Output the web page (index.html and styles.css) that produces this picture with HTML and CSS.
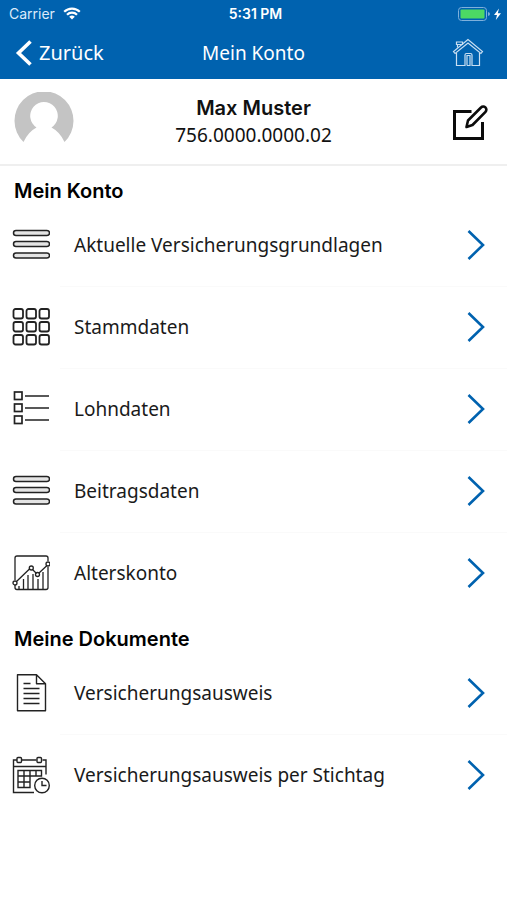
FILE: index.html
```html
<!DOCTYPE html>
<html lang="de">
<head>
<meta charset="utf-8">
<meta name="viewport" content="width=device-width, initial-scale=1">
<title>Mein Konto</title>
<link rel="stylesheet" href="styles.css">
</head>
<body>
<svg class="sprite" aria-hidden="true">
  <symbol id="chevron" viewBox="0 0 18 32"><path d="M1.500 2 16 16 1.500 30" fill="none" stroke="currentColor" stroke-width="2.600"/></symbol>
  <symbol id="bars" viewBox="0 0 38 38"><g fill="#e4e4e4" stroke="#222" stroke-width="1.500"><rect x="1.500" y="4.500" width="36" height="5" rx="2.500"/><rect x="1.500" y="15.500" width="36" height="5" rx="2.500"/><rect x="1.500" y="27" width="36" height="5" rx="2.500"/></g></symbol>
</svg>
<header class="top">
  <div class="status">
    <div class="carrier"><span>Carrier</span>
      <svg width="18" height="13" viewBox="0 0 18 13" aria-hidden="true"><g fill="none" stroke="#fff" stroke-width="2.200"><path d="M1.200 4.800a11 11 0 0 1 15.600 0"/><path d="M4 7.700a7 7 0 0 1 10 0"/></g><path d="M9 12.600 6.200 9.800a4 4 0 0 1 5.600 0z" fill="#fff"/></svg>
    </div>
    <div class="time">5:31 PM</div>
    <div class="power">
      <svg width="44" height="16" viewBox="0 0 44 16" aria-hidden="true"><rect x=".5" y="1.500" width="28" height="13" rx="3" fill="none" stroke="#7eb0dc"/><rect x="2.500" y="3.500" width="24" height="9" rx="1" fill="#4cd964"/><path d="M30 6v4q2-.500 2-2t-2-2z" fill="#7eb0dc"/><path d="M41 2.500 36 9h3l-1.200 5L43 7.200h-3.200z" fill="#fff"/></svg>
    </div>
  </div>
  <nav class="bar">
    <button class="back" type="button"><svg width="18" height="28" viewBox="0 0 18 28" aria-hidden="true"><path d="M16.500 2.500 4.500 14l12 11.500" fill="none" stroke="#fff" stroke-width="3.600"/></svg><span>Zurück</span></button>
    <h1>Mein Konto</h1>
    <button class="home" type="button" aria-label="Startseite"><svg width="32" height="30" viewBox="0 0 32 30" aria-hidden="true"><g fill="none" stroke="#c9dff2" stroke-width="1.200"><path d="M16 1.500 1.500 13.500l1.600 2L16 5l12.900 10.500 1.600-2z"/><path d="M4.500 15v12.500h8.500V17q0-1.500 1.500-1.500h4q1.500 0 1.500 1.500v10.500h7.500V15M15 27.500V17.500h3v10h-3"/><path d="M5.500 9.500V6.500h4.500M4.500 4h6v2.500h-6z"/></g></svg></button>
  </nav>
</header>
<main>
  <section class="profile">
    <svg width="60" height="60" viewBox="0 0 60 60" role="img" aria-label="Profilbild"><path d="M9.500 50A29.500 29.500 0 1 1 50.500 50Q46 40 37.500 35.500A13.800 13.800 0 1 0 22.500 35.500Q14 40 9.500 50z" fill="#c4c4c4"/></svg>
    <div class="person"><strong>Max Muster</strong><span>756.0000.0000.02</span></div>
    <button type="button" aria-label="Bearbeiten"><svg width="38" height="38" viewBox="0 0 38 38" aria-hidden="true"><g fill="none" stroke="#0b0b0b"><path d="M20.500 8.500H3.500v27H31.500V19" stroke-width="3"/><path d="M15.500 24 17 17.500 30 4.500a3 3 0 0 1 4.500 4.300L21.500 22z" stroke-width="2.600" stroke-linejoin="round"/></g></svg></button>
  </section>
  <section>
    <h2>Mein Konto</h2>
    <ul>
      <li><a href="#grundlagen"><svg class="icon" aria-hidden="true"><use href="#bars"/></svg><span>Aktuelle Versicherungsgrundlagen</span><svg class="chevron" aria-hidden="true"><use href="#chevron"/></svg></a></li>
      <li><a href="#stammdaten"><svg class="icon" viewBox="0 0 38 38" aria-hidden="true"><g fill="none" stroke="#222" stroke-width="1.800"><rect x="1.500" y="1" width="9.500" height="9.500" rx="2"/><rect x="14.500" y="1" width="9.500" height="9.500" rx="2"/><rect x="27.500" y="1" width="9.500" height="9.500" rx="2"/><rect x="1.500" y="14" width="9.500" height="9.500" rx="2"/><rect x="14.500" y="14" width="9.500" height="9.500" rx="2"/><rect x="27.500" y="14" width="9.500" height="9.500" rx="2"/><rect x="1.500" y="27" width="9.500" height="9.500" rx="2"/><rect x="14.500" y="27" width="9.500" height="9.500" rx="2"/><rect x="27.500" y="27" width="9.500" height="9.500" rx="2"/></g></svg><span>Stammdaten</span><svg class="chevron" aria-hidden="true"><use href="#chevron"/></svg></a></li>
      <li><a href="#lohndaten"><svg class="icon" viewBox="0 0 38 38" aria-hidden="true"><g fill="none" stroke="#222" stroke-width="1.700"><rect x="2.500" y="2" width="7.500" height="7.500"/><rect x="2.500" y="14" width="7.500" height="7.500"/><rect x="2.500" y="26" width="7.500" height="7.500"/><path d="M13 6h24M13 18h24M13 30h24"/></g></svg><span>Lohndaten</span><svg class="chevron" aria-hidden="true"><use href="#chevron"/></svg></a></li>
      <li><a href="#beitragsdaten"><svg class="icon" aria-hidden="true"><use href="#bars"/></svg><span>Beitragsdaten</span><svg class="chevron" aria-hidden="true"><use href="#chevron"/></svg></a></li>
      <li><a href="#alterskonto"><svg class="icon" viewBox="0 0 38 38" aria-hidden="true"><g fill="none" stroke="#222" stroke-width="1.300"><path d="M3 26V4q0-2 2-2h29q2 0 2 2v3M3 31v2.500q0 2 2 2h29q2 0 2-2V13"/><path d="m4.500 27.500 13.500-13M20.500 15.500l4 4M27 19l8-7.500"/><circle cx="3" cy="29" r="2"/><circle cx="19.300" cy="14" r="2"/><circle cx="25.500" cy="20.500" r="2"/><circle cx="36" cy="10" r="2"/><path d="M7 32v3M11.500 25v10M16 21v14M21 20v15M26 25v10M31 18v17"/></g></svg><span>Alterskonto</span><svg class="chevron" aria-hidden="true"><use href="#chevron"/></svg></a></li>
    </ul>
  </section>
  <section>
    <h2>Meine Dokumente</h2>
    <ul>
      <li><a href="#ausweis"><svg class="icon" viewBox="0 0 38 38" aria-hidden="true"><g fill="none" stroke="#222" stroke-width="1.400" stroke-linejoin="round"><path d="M5.500 .7h19l9 9v27h-28zM24.500 .7v9h9M11.500 9.500h7M11.500 14.500h16M11.500 19.500h16M11.500 24.500h16M11.500 29.500h16"/></g></svg><span>Versicherungsausweis</span><svg class="chevron" aria-hidden="true"><use href="#chevron"/></svg></a></li>
      <li><a href="#stichtag"><svg class="icon" viewBox="0 0 38 38" aria-hidden="true"><g fill="none" stroke="#222" stroke-width="1.400"><path d="M5 4H1.500v32.500h20.500M10 4h14.500M30.500 4H34v14.500M1.500 10.500H34"/><rect x="5" y="1.500" width="4.500" height="5" rx="1"/><rect x="25" y="1.500" width="4.500" height="5" rx="1"/><path d="M6 14.500H29.500v5.500H6zM6 14.500v17H18v-17M12 14.500v17M24 14.500V20M6 26H18"/><circle cx="30" cy="29.500" r="7.300"/><path d="M30 25v4.500h4.500"/></g></svg><span>Versicherungsausweis per Stichtag</span><svg class="chevron" aria-hidden="true"><use href="#chevron"/></svg></a></li>
    </ul>
  </section>
</main>
</body>
</html>
```
FILE: styles.css
```css
* { box-sizing: border-box; }
body { margin: 0; background: #fff; color: #111; font-family: "Noto Sans", "Open Sans", sans-serif; }
.sprite { display: block; width: 0; height: 0; }
svg { display: block; flex: none; }
h1, h2, ul { margin: 0; padding: 0; }
button { border: 0; padding: 0; background: none; color: inherit; font: inherit; }
.top { background: #0062af; color: #fff; }
.status, .bar { display: grid; grid-template-columns: 1fr auto 1fr; align-items: center; }
.status { height: 27px; padding: 0 5px 0 9px; font: 14px/20px Inter, sans-serif; }
.carrier { display: flex; align-items: center; gap: 8px; color: #dceafa; }
.time { font-weight: 600; }
.power { justify-self: end; }
.bar { height: 52px; padding: 0 14px; font-size: 20px; line-height: 28px; }
.back { display: flex; align-items: center; gap: 7px; }
h1 { font-size: 19px; font-weight: 400; }
.home { justify-self: end; margin-right: 9px; }
.profile { display: grid; grid-template-columns: 60px 1fr 60px; align-items: center; padding: 13px 14px 12px; border-bottom: 2px solid #efefef; }
.profile button { justify-self: end; margin-right: 4px; }
.person { display: flex; flex-direction: column; align-items: center; font-size: 19px; line-height: 27px; }
.person strong { font-family: Inter, sans-serif; font-size: 20px; font-weight: 600; }
h2 { padding: 12px 14px 0; color: #000; font: 600 20px/26px Inter, sans-serif; }
ul { list-style: none; }
li a { display: flex; align-items: center; height: 82px; padding: 0 22px 0 12px; color: #1a1a1a; font-size: 19px; line-height: 28px; text-decoration: none; }
li a span { flex: 1; margin-left: 24px; }
li + li a { background: linear-gradient(#fafafa, #fafafa) 60px 0 / 100% 1px no-repeat; }
.icon { width: 38px; height: 38px; }
.chevron { width: 18px; height: 32px; color: #0062af; }
```
